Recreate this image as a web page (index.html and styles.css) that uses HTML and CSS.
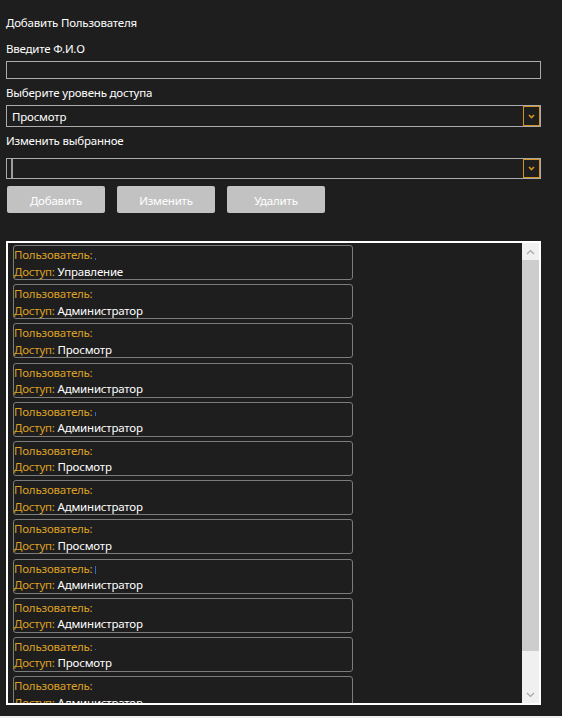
FILE: index.html
```html
<!DOCTYPE html>
<html lang="ru">
<head>
<meta charset="utf-8">
<title>Пользователи</title>
<link rel="stylesheet" href="styles.css">
</head>
<body>
<div class="page">
  <div class="title">Добавить Пользователя</div>
  <div class="label first">Введите Ф.И.О</div>
  <div class="input"></div>
  <div class="label">Выберите уровень доступа</div>
  <div class="combo">
    <span class="combo-text">Просмотр</span>
    <span class="drop"><svg width="7" height="5" viewBox="0 0 7 5"><polyline points="1,1 3.5,3.6 6,1" fill="none" stroke="#d4921e" stroke-width="1.7"/></svg></span>
  </div>
  <div class="label">Изменить выбранное</div>
  <div class="combo combo2">
    <span class="caret"></span>
    <span class="combo-text"></span>
    <span class="drop"><svg width="7" height="5" viewBox="0 0 7 5"><polyline points="1,1 3.5,3.6 6,1" fill="none" stroke="#d4921e" stroke-width="1.7"/></svg></span>
  </div>
  <div class="buttons">
    <button class="btn">Добавить</button>
    <button class="btn">Изменить</button>
    <button class="btn">Удалить</button>
  </div>
  <div class="listbox">
    <div class="items">
      <div class="item"><div class="ln"><span class="k">Пользователь:</span> <span class="mark m-comma"></span></div><div class="ln"><span class="k">Доступ:</span> Управление</div></div>
      <div class="item"><div class="ln"><span class="k">Пользователь:</span></div><div class="ln"><span class="k">Доступ:</span> Администратор</div></div>
      <div class="item"><div class="ln"><span class="k">Пользователь:</span></div><div class="ln"><span class="k">Доступ:</span> Просмотр</div></div>
      <div class="item"><div class="ln"><span class="k">Пользователь:</span></div><div class="ln"><span class="k">Доступ:</span> Администратор</div></div>
      <div class="item"><div class="ln"><span class="k">Пользователь:</span> <span class="mark m-short"></span></div><div class="ln"><span class="k">Доступ:</span> Администратор</div></div>
      <div class="item"><div class="ln"><span class="k">Пользователь:</span></div><div class="ln"><span class="k">Доступ:</span> Просмотр</div></div>
      <div class="item"><div class="ln"><span class="k">Пользователь:</span></div><div class="ln"><span class="k">Доступ:</span> Администратор</div></div>
      <div class="item"><div class="ln"><span class="k">Пользователь:</span></div><div class="ln"><span class="k">Доступ:</span> Просмотр</div></div>
      <div class="item"><div class="ln"><span class="k">Пользователь:</span> <span class="mark m-tall"></span></div><div class="ln"><span class="k">Доступ:</span> Администратор</div></div>
      <div class="item"><div class="ln"><span class="k">Пользователь:</span></div><div class="ln"><span class="k">Доступ:</span> Администратор</div></div>
      <div class="item"><div class="ln"><span class="k">Пользователь:</span> <span class="mark m-dot"></span></div><div class="ln"><span class="k">Доступ:</span> Просмотр</div></div>
      <div class="item"><div class="ln"><span class="k">Пользователь:</span></div><div class="ln"><span class="k">Доступ:</span> Администратор</div></div>
    </div>
    <div class="scrollbar">
      <div class="sb-btn"><svg width="9" height="6" viewBox="0 0 9 6"><polyline points="1,5 4.5,1.5 8,5" fill="none" stroke="#a6a6a6" stroke-width="1.2"/></svg></div>
      <div class="thumb"></div>
      <div class="track"></div>
      <div class="sb-btn"><svg width="9" height="6" viewBox="0 0 9 6"><polyline points="1,1 4.5,4.5 8,1" fill="none" stroke="#a6a6a6" stroke-width="1.2"/></svg></div>
    </div>
  </div>
</div>
<div class="hline"></div>
</body>
</html>
```

FILE: styles.css
```css
html, body {
  margin: 0;
  height: 100%;
  overflow: hidden;
}
body {
  background: #1e1e1e;
  color: #ffffff;
  font-family: "Noto Sans", "Open Sans", sans-serif;
  font-size: 11.5px;
  letter-spacing: -0.2px;
}
.page {
  padding: 15px 0 0 6px;
}
.title {
  line-height: 16px;
  height: 16px;
}
.label {
  line-height: 18px;
  height: 16px;
  margin-top: 5px;
}
.label.first {
  margin-top: 9px;
}
.input {
  width: 535px;
  height: 18px;
  box-sizing: border-box;
  border: 1px solid #ababab;
  margin-top: 5px;
}
.combo {
  width: 535px;
  height: 22px;
  box-sizing: border-box;
  border: 1px solid #ababab;
  margin-top: 5px;
  display: flex;
  align-items: stretch;
}
.combo2 {
  height: 21px;
  margin-top: 10px;
}
.combo-text {
  flex: 1;
  padding-left: 5px;
  line-height: 22px;
  height: 20px;
  overflow: visible;
}
.caret {
  width: 2px;
  margin-left: 4px;
  background: #9c9c9c;
}
.drop {
  width: 17px;
  box-sizing: border-box;
  border: 1px solid #d4921e;
  display: flex;
  align-items: center;
  justify-content: center;
}
.buttons {
  display: flex;
  gap: 12px;
  margin-top: 7px;
  margin-left: 1px;
}
.btn {
  width: 98px;
  height: 27px;
  border: none;
  border-radius: 2px;
  background: #c2c2c2;
  color: #ffffff;
  font-family: "Noto Sans", "Open Sans", sans-serif;
  font-size: 11.5px;
  letter-spacing: -0.2px;
  padding: 1px 0 0 0;
}
.listbox {
  margin-top: 28px;
  width: 535px;
  height: 464px;
  box-sizing: border-box;
  border: 2px solid #ffffff;
  display: flex;
}
.items {
  flex: 1;
  overflow: hidden;
  padding: 2px 0 0 5px;
}
.item {
  width: 340px;
  height: 35px;
  box-sizing: border-box;
  border: 1px solid #7c7c7c;
  border-radius: 3px;
  margin-bottom: 4.2px;
  white-space: nowrap;
}
.ln {
  line-height: 17px;
  height: 16.5px;
}
.k {
  color: #dca024;
}
.mark {
  display: inline-block;
  width: 1px;
  background: #3068d0;
  vertical-align: baseline;
}
.m-comma { height: 2px; vertical-align: -1px; }
.m-short { height: 4px; }
.m-tall { height: 8px; vertical-align: -1px; }
.m-dot { height: 1px; vertical-align: 1px; }
.scrollbar {
  width: 17px;
  display: flex;
  flex-direction: column;
}
.sb-btn {
  height: 17px;
  background: #f0f0f0;
  display: flex;
  align-items: center;
  justify-content: center;
}
.thumb {
  height: 391px;
  background: #cdcdcd;
}
.track {
  flex: 1;
  background: #f0f0f0;
}
.hline {
  margin-top: 11px;
  height: 2px;
  background: #f0f0f0;
}
```
